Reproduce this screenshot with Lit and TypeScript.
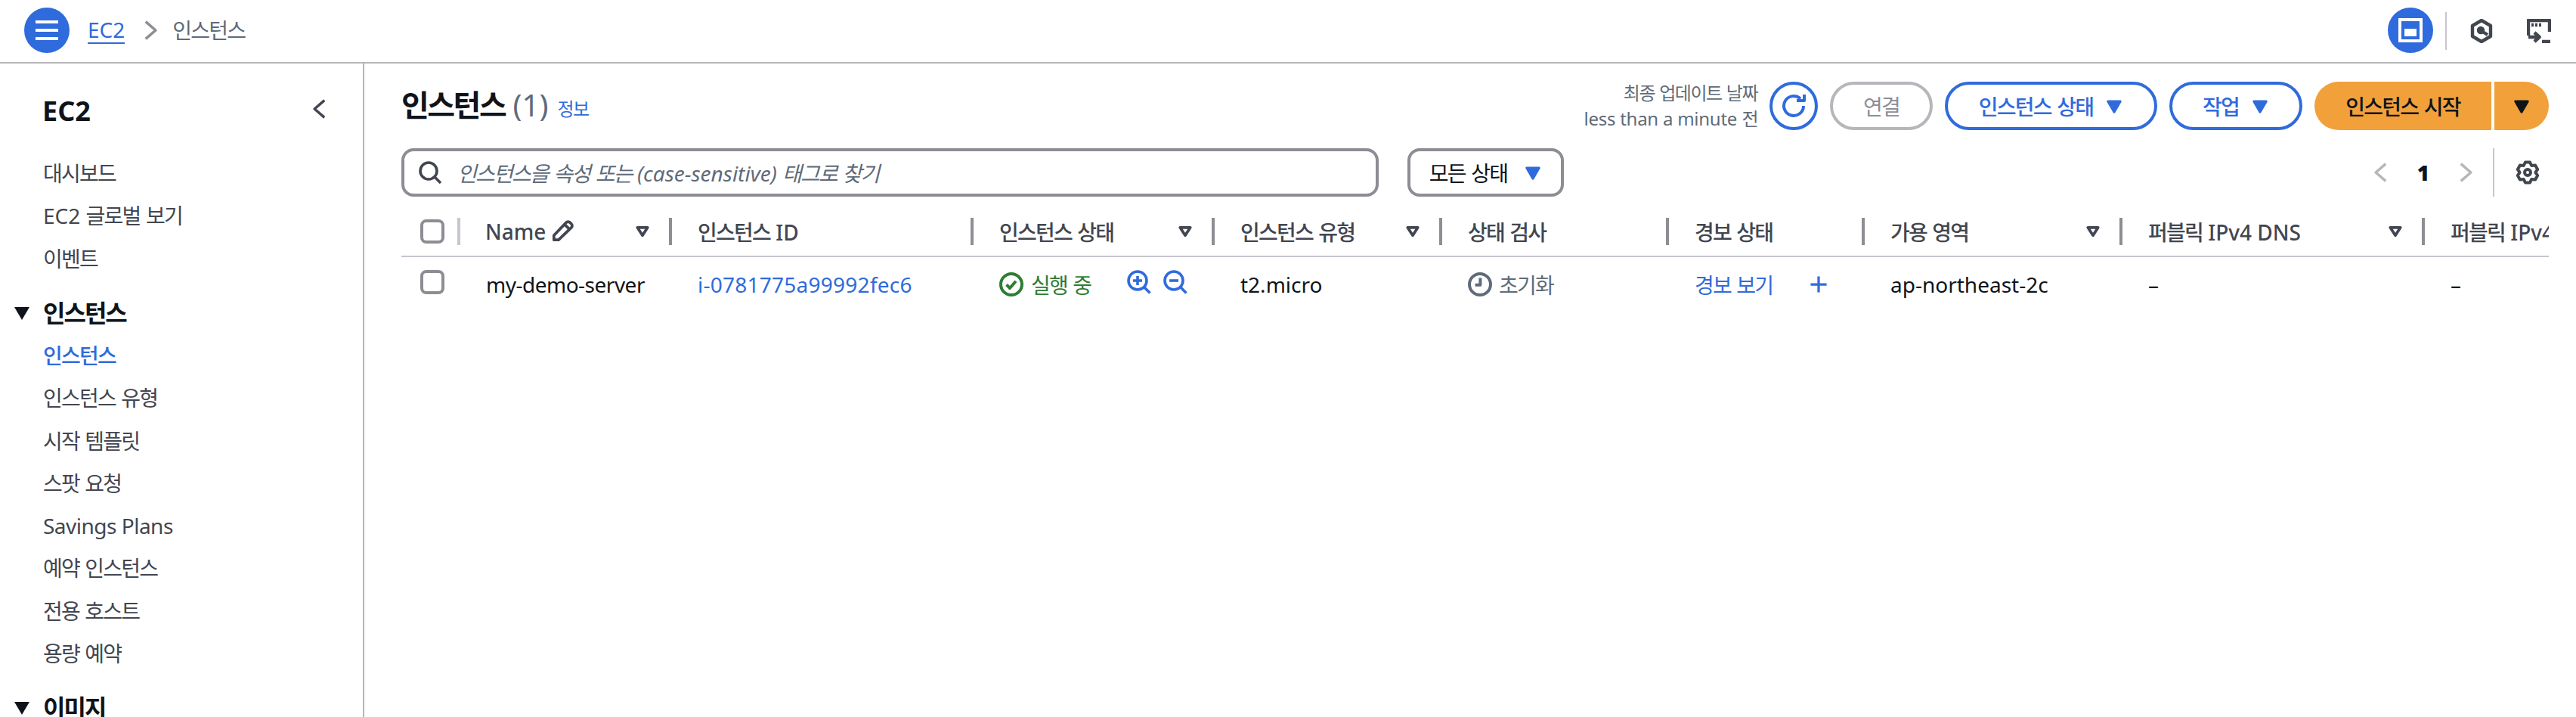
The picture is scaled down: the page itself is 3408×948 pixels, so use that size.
import { LitElement, html, css, svg } from 'lit';
import { customElement } from 'lit/decorators.js';

const icon = (cls: string, body: unknown) =>
  html`<svg class="icon ${cls}" viewBox="0 0 16 16">${body}</svg>`;

// hangul in the reference sits tighter than Noto CJK's advance, so wrap runs and tighten them
const t = (s: string) =>
  s.split(/([\uac00-\ud7a3]+)/).map((part, i) => (i % 2 ? html`<span class="ko">${part}</span>` : part));

const gearPath = () => {
  const pt = (deg: number, r: number) => {
    const a = (deg * Math.PI) / 180;
    return `${(8 + r * Math.cos(a)).toFixed(2)} ${(8 + r * Math.sin(a)).toFixed(2)}`;
  };
  let d = '';
  for (let i = 0; i < 6; i++) {
    const a = i * 60 - 90;
    d += `${i ? 'L' : 'M'}${pt(a - 30, 5.2)}L${pt(a - 13, 6.9)}L${pt(a + 13, 6.9)}`;
  }
  return d + 'Z';
};

const SEARCH = svg`<circle cx="7" cy="7" r="5.5"/><path d="m11 11 4 4"/>`;
const PENCIL = svg`<path d="M1.500 14.500v-3.200L10.200 2.200a1.800 1.800 0 0 1 2.600 0l1 1a1.800 1.800 0 0 1 0 2.600L4.800 14.500H1.500Z"/><path d="m9 3.500 3.500 3.500"/>`;
const CHEVRON_LEFT = svg`<path d="M11 1.500 3.500 8l7.500 6.500"/>`;
const CHEVRON_RIGHT = svg`<path d="M5 1.500 12.500 8 5 14.500"/>`;
const CARET = svg`<path class="solid" d="M2.500 4h11L8 13.500 2.500 4Z"/>`;
const FILTER = svg`<path d="M3.500 4.500h9L8 11.500l-4.500-7Z"/>`;
const REFRESH = svg`<path d="M10 4.500h5V.5"/><path d="M14.500 8a6.500 6.500 0 1 1-2-4.700"/>`;
const GEAR = svg`<circle cx="8" cy="8" r="2"/><path d=${gearPath()}/>`;
const CHECK_CIRCLE = svg`<circle cx="8" cy="8" r="7"/><path d="m4.800 8.200 2.200 2.300 4-4.600"/>`;
const CLOCK = svg`<circle cx="8" cy="8" r="7"/><path d="M8.200 3.800v4.600H4.800"/>`;
const ZOOM_IN = svg`<circle cx="7" cy="7" r="6"/><path d="m11.300 11.300 3.900 3.900"/><path d="M4 7h6M7 4v6"/>`;
const ZOOM_OUT = svg`<circle cx="7" cy="7" r="6"/><path d="m11.300 11.300 3.900 3.900"/><path d="M4 7h6"/>`;
const PLUS = svg`<path d="M8 1.500v13M1.500 8h13"/>`;
const CLOUDSHELL = svg`<path d="M1 11V1h14v7.500"/><path d="M3 4h1.500M5.500 4H7M8 4h1.500"/><path d="M1 12h7M5 9l3.300 3L5 15M10 15h5.500"/>`;
const HEX = svg`<path d="M8 1 14 4.500v7L8 15l-6-3.500v-7L8 1Z"/><circle class="solid" cx="7.500" cy="7.500" r="1.500"/><path d="m8 8 4 2.500"/>`;

const NAV_TOP = ['대시보드', 'EC2 글로벌 보기', '이벤트'];
const NAV_INST = ['인스턴스 유형', '시작 템플릿', '스팟 요청', 'Savings Plans', '예약 인스턴스', '전용 호스트', '용량 예약'];

const COLS = [
  { label: '인스턴스 ID', width: 399 },
  { label: '인스턴스 상태', width: 319, filter: true },
  { label: '인스턴스 유형', width: 301, filter: true },
  { label: '상태 검사', width: 300 },
  { label: '경보 상태', width: 259 },
  { label: '가용 영역', width: 341, filter: true },
  { label: '퍼블릭 IPv4 DNS', width: 400, filter: true },
  { label: '퍼블릭 IPv4', width: 164 },
];

@customElement('app-root')
export class AppRoot extends LitElement {
  static override styles = css`
    :host {
      display: block;
      width: 3408px;
      height: 948px;
      overflow: hidden;
      background: #fff;
      color: #0f141a;
      font-family: 'Noto Sans', 'Noto Sans CJK KR', sans-serif;
      font-size: 28px;
    }
    .ko {
      letter-spacing: -0.0625em;
    }
    .tight {
      letter-spacing: -0.5px;
    }
    .wide {
      letter-spacing: 0.25px;
    }
    .icon {
      display: block;
      flex: none;
      fill: none;
      stroke: currentColor;
      stroke-width: 2;
      stroke-linejoin: round;
    }
    .icon .solid {
      fill: currentColor;
    }
    a {
      color: #2f6bdc;
      text-decoration: none;
    }

    .topbar {
      box-sizing: border-box;
      height: 84px;
      border-bottom: 2px solid #b6b6bb;
      padding: 0 33px 0 32px;
      display: flex;
      align-items: center;
    }
    .round {
      width: 60px;
      height: 60px;
      border-radius: 50%;
      background: #2f6bdc;
      color: #fff;
      display: flex;
      align-items: center;
      justify-content: center;
      margin-top: -2px;
    }
    .burger {
      width: 30px;
      height: 26px;
      border-top: 4px solid #fff;
      border-bottom: 4px solid #fff;
      box-sizing: border-box;
      position: relative;
    }
    .burger::after {
      content: '';
      position: absolute;
      left: 0;
      right: 0;
      top: 7px;
      height: 4px;
      background: #fff;
    }
    .crumb {
      margin-left: 24px;
      line-height: 34px;
      color: #2f6bdc;
      border-bottom: 2px solid #2f6bdc;
      margin-top: -2px;
    }
    .crumb-sep {
      width: 28px;
      height: 28px;
      margin: -2px 16px 0 19px;
      color: #8d8d94;
    }
    .crumb-now {
      color: #5f6b7a;
      margin-top: -4px;
    }
    .spacer {
      flex: 1;
    }
    .win {
      width: 32px;
      height: 32px;
      box-sizing: border-box;
      background: #2f6bdc;
      border: 4px solid #fff;
      padding: 10px 4px 4px;
      display: flex;
    }
    .win i {
      flex: 1;
      background: #fff;
      display: block;
    }
    .top-div {
      width: 2px;
      height: 50px;
      background: #c6c6cd;
      margin: 0 30px 0 16px;
    }
    .top-ico {
      width: 32px;
      height: 32px;
      color: #424650;
      stroke-width: 2.2;
    }
    .top-ico + .top-ico {
      margin-left: 44px;
    }

    .body {
      display: flex;
      height: 864px;
    }
    .side {
      box-sizing: border-box;
      width: 482px;
      flex: none;
      border-right: 2px solid #b6b6bb;
      overflow: hidden;
      padding: 36px 0 0 57px;
    }
    .side-head {
      display: flex;
      align-items: center;
      justify-content: space-between;
      height: 48px;
      padding-right: 42px;
    }
    .side-head b {
      font-size: 36px;
      font-weight: 700;
      margin: 4px 0 0 -1px;
    }
    .side-head .icon {
      width: 28px;
      height: 28px;
      color: #424650;
    }
    .nav {
      margin-top: 33px;
      display: flex;
      flex-direction: column;
    }
    .nav div {
      height: 56.25px;
      line-height: 56.25px;
      color: #424650;
      white-space: nowrap;
      position: relative;
    }
    .nav .group {
      margin-top: 16px;
      color: #0f141a;
      font-weight: 700;
      font-size: 32px;
    }
    .nav .group::before {
      content: '';
      position: absolute;
      left: -38px;
      top: 20px;
      border-left: 10px solid transparent;
      border-right: 10px solid transparent;
      border-top: 17px solid #0f141a;
    }
    .nav .active {
      color: #2f6bdc;
      font-weight: 500;
    }

    .main {
      flex: 1;
      min-width: 0;
      padding: 24px 36px 0 49px;
    }
    .head {
      display: flex;
      align-items: center;
      height: 64px;
    }
    .title {
      font-size: 40px;
      font-weight: 700;
      line-height: 64px;
      margin-top: -2px;
      white-space: nowrap;
    }
    .title span.count {
      color: #5f6b7a;
      font-weight: 400;
    }
    .info {
      font-size: 24px;
      margin: 8px 0 0 12px;
      line-height: 32px;
    }
    .updated {
      text-align: right;
      font-size: 24px;
      line-height: 34px;
      color: #5f6b7a;
      margin-right: 16px;
    }
    .updated .latin {
      letter-spacing: -0.25px;
    }
    .btn {
      box-sizing: border-box;
      height: 64px;
      border: 4px solid #2f6bdc;
      border-radius: 32px;
      color: #2f6bdc;
      font-weight: 500;
      display: flex;
      align-items: center;
      margin-left: 16px;
      white-space: nowrap;
    }
    .btn .icon {
      width: 24px;
      height: 24px;
      margin-left: 16px;
    }
    .btn-refresh {
      width: 64px;
      justify-content: center;
      margin-left: 0;
    }
    .btn-refresh .icon {
      width: 32px;
      height: 32px;
      margin: 0;
    }
    .btn-off {
      width: 136px;
      justify-content: center;
      border-color: #b6b6bb;
      color: #8d8d94;
      font-weight: 400;
    }
    .btn-state {
      width: 281px;
      justify-content: center;
    }
    .btn-act {
      width: 176px;
      justify-content: center;
    }
    .split {
      display: flex;
      margin-left: 16px;
      height: 64px;
      font-weight: 500;
      white-space: nowrap;
    }
    .split > span {
      background: #f2a03a;
      display: flex;
      align-items: center;
      justify-content: center;
    }
    .split .l {
      width: 234px;
      border-radius: 32px 0 0 32px;
    }
    .split .r {
      width: 72px;
      margin-left: 4px;
      border-radius: 0 32px 32px 0;
    }
    .split .icon {
      width: 24px;
      height: 24px;
    }

    .tools {
      display: flex;
      align-items: center;
      height: 64px;
      margin-top: 24px;
    }
    .search {
      box-sizing: border-box;
      width: 1293px;
      height: 64px;
      border: 4px solid #8d8d94;
      border-radius: 16px;
      display: flex;
      align-items: center;
      padding-left: 18px;
      color: #5f6b7a;
      font-style: italic;
      white-space: pre;
    }
    .search .icon {
      width: 32px;
      height: 32px;
      margin-right: 20px;
      color: #424650;
      stroke-width: 1.8;
    }
    .select {
      box-sizing: border-box;
      width: 207px;
      height: 64px;
      margin-left: 38px;
      border: 4px solid #8d8d94;
      border-radius: 16px;
      display: flex;
      align-items: center;
      justify-content: center;
      white-space: pre;
    }
    .select .icon {
      width: 24px;
      height: 24px;
      margin-left: 22px;
      color: #2f6bdc;
    }
    .pager {
      display: flex;
      align-items: center;
      font-weight: 700;
    }
    .pager .icon {
      width: 28px;
      height: 28px;
      color: #b6b6bb;
    }
    .pager b {
      width: 82px;
      text-align: center;
    }
    .pager-div {
      width: 2px;
      height: 64px;
      background: #c6c6cd;
      margin: 0 28px 0 23px;
    }
    .pager .gear {
      width: 32px;
      height: 32px;
      color: #424650;
      margin-right: 12px;
    }

    .table {
      margin-top: 28px;
      overflow: hidden;
    }
    .row {
      display: flex;
      white-space: nowrap;
    }
    .row-head {
      height: 50px;
      border-bottom: 2px solid #c6c6cd;
      font-weight: 500;
      color: #424650;
    }
    .cell {
      box-sizing: border-box;
      flex: none;
      height: 36px;
      padding: 0 23px 0 34px;
      display: flex;
      align-items: center;
      justify-content: space-between;
      border-right: 4px solid #8d8d94;
    }
    .cell:last-child {
      border-right: none;
      overflow: hidden;
    }
    .cell-check {
      padding: 0 0 0 25px;
      border-right-color: #c6c6cd;
      justify-content: flex-start;
    }
    .box {
      box-sizing: border-box;
      display: block;
      width: 32px;
      height: 32px;
      border: 4px solid #8d8d94;
      border-radius: 8px;
    }
    .cell .filter {
      width: 24px;
      height: 24px;
      stroke-width: 2.5;
    }
    .name {
      display: flex;
      align-items: center;
      gap: 8px;
      margin-left: -1px;
    }
    .name .icon {
      width: 30px;
      height: 30px;
      margin-top: -2px;
    }
    .row-body {
      height: 72px;
      align-items: center;
    }
    .td {
      box-sizing: border-box;
      flex: none;
      padding-left: 34px;
      display: flex;
      align-items: center;
    }
    .td-check {
      padding-left: 25px;
      margin-top: -6px;
    }
    .ok {
      color: #2e7d32;
      gap: 10px;
    }
    .ok .icon,
    .wait .icon {
      width: 32px;
      height: 32px;
    }
    .zooms {
      display: flex;
      gap: 16px;
      margin-left: 38px;
      color: #2f6bdc;
      margin-top: -6px;
    }
    .zooms .icon {
      width: 32px;
      height: 32px;
      stroke-width: 1.8;
    }
    .wait {
      color: #5f6b7a;
      gap: 9px;
    }
    .plus {
      width: 26px;
      height: 26px;
      margin-left: 48px;
      color: #2f6bdc;
    }
  `;

  private _renderHeader() {
    return html`<div class="row row-head">
      <div class="cell cell-check" style="width:78px"><span class="box"></span></div>
      <div class="cell" style="width:280px">
        <span class="name">Name ${icon('', PENCIL)}</span>${icon('filter', FILTER)}
      </div>
      ${COLS.map(
        (c) => html`<div class="cell" style="width:${c.width}px">
          <span>${t(c.label)}</span>${c.filter ? icon('filter', FILTER) : ''}
        </div>`
      )}
    </div>`;
  }

  private _renderRow() {
    const w = (n: number) => `width:${n}px`;
    return html`<div class="row row-body">
      <div class="td td-check" style=${w(78)}><span class="box"></span></div>
      <div class="td" style=${w(280)}><span class="tight">my-demo-server</span></div>
      <div class="td" style=${w(399)}><a class="wide" href="#">i-0781775a99992fec6</a></div>
      <div class="td ok" style=${w(319)}>
        ${icon('', CHECK_CIRCLE)}<span>${t('실행 중')}</span>
        <span class="zooms">${icon('', ZOOM_IN)}${icon('', ZOOM_OUT)}</span>
      </div>
      <div class="td" style=${w(301)}>t2.micro</div>
      <div class="td wait" style=${w(300)}>${icon('', CLOCK)}<span>${t('초기화')}</span></div>
      <div class="td" style=${w(259)}><a href="#">${t('경보 보기')}</a>${icon('plus', PLUS)}</div>
      <div class="td" style=${w(341)}>ap-northeast-2c</div>
      <div class="td" style=${w(400)}>–</div>
      <div class="td" style=${w(164)}>–</div>
    </div>`;
  }

  protected override render() {
    return html`
      <div class="topbar">
        <span class="round"><span class="burger"></span></span>
        <a class="crumb" href="#">EC2</a>
        ${icon('crumb-sep', CHEVRON_RIGHT)}
        <span class="crumb-now">${t('인스턴스')}</span>
        <span class="spacer"></span>
        <span class="round"><span class="win"><i></i></span></span>
        <span class="top-div"></span>
        ${icon('top-ico', HEX)} ${icon('top-ico', CLOUDSHELL)}
      </div>
      <div class="body">
        <nav class="side">
          <div class="side-head"><b>EC2</b>${icon('', CHEVRON_LEFT)}</div>
          <div class="nav">
            ${NAV_TOP.map((n) => html`<div>${t(n)}</div>`)}
            <div class="group">${t('인스턴스')}</div>
            <div class="active">${t('인스턴스')}</div>
            ${NAV_INST.map((n) => html`<div class=${n === 'Savings Plans' ? 'tight' : ''}>${t(n)}</div>`)}
            <div class="group">${t('이미지')}</div>
          </div>
        </nav>
        <main class="main">
          <div class="head">
            <span class="title">${t('인스턴스')} <span class="count">(1)</span></span>
            <a class="info" href="#">${t('정보')}</a>
            <span class="spacer"></span>
            <div class="updated">${t('최종 업데이트 날짜')}<br /><span class="latin">less than a minute</span> ${t('전')}</div>
            <span class="btn btn-refresh">${icon('', REFRESH)}</span>
            <span class="btn btn-off">${t('연결')}</span>
            <span class="btn btn-state"><span>${t('인스턴스 상태')}</span>${icon('', CARET)}</span>
            <span class="btn btn-act"><span>${t('작업')}</span>${icon('', CARET)}</span>
            <span class="split">
              <span class="l"><span>${t('인스턴스 시작')}</span></span>
              <span class="r">${icon('', CARET)}</span>
            </span>
          </div>
          <div class="tools">
            <div class="search">${icon('', SEARCH)}<span>${t('인스턴스을 속성 또는 (case-sensitive) 태그로 찾기')}</span></div>
            <div class="select"><span>${t('모든 상태')}</span>${icon('', CARET)}</div>
            <span class="spacer"></span>
            <div class="pager">
              ${icon('', CHEVRON_LEFT)}<b>1</b>${icon('', CHEVRON_RIGHT)}
              <span class="pager-div"></span>
              ${icon('gear', GEAR)}
            </div>
          </div>
          <div class="table">${this._renderHeader()} ${this._renderRow()}</div>
        </main>
      </div>
    `;
  }
}

declare global {
  interface HTMLElementTagNameMap {
    'app-root': AppRoot;
  }
}
